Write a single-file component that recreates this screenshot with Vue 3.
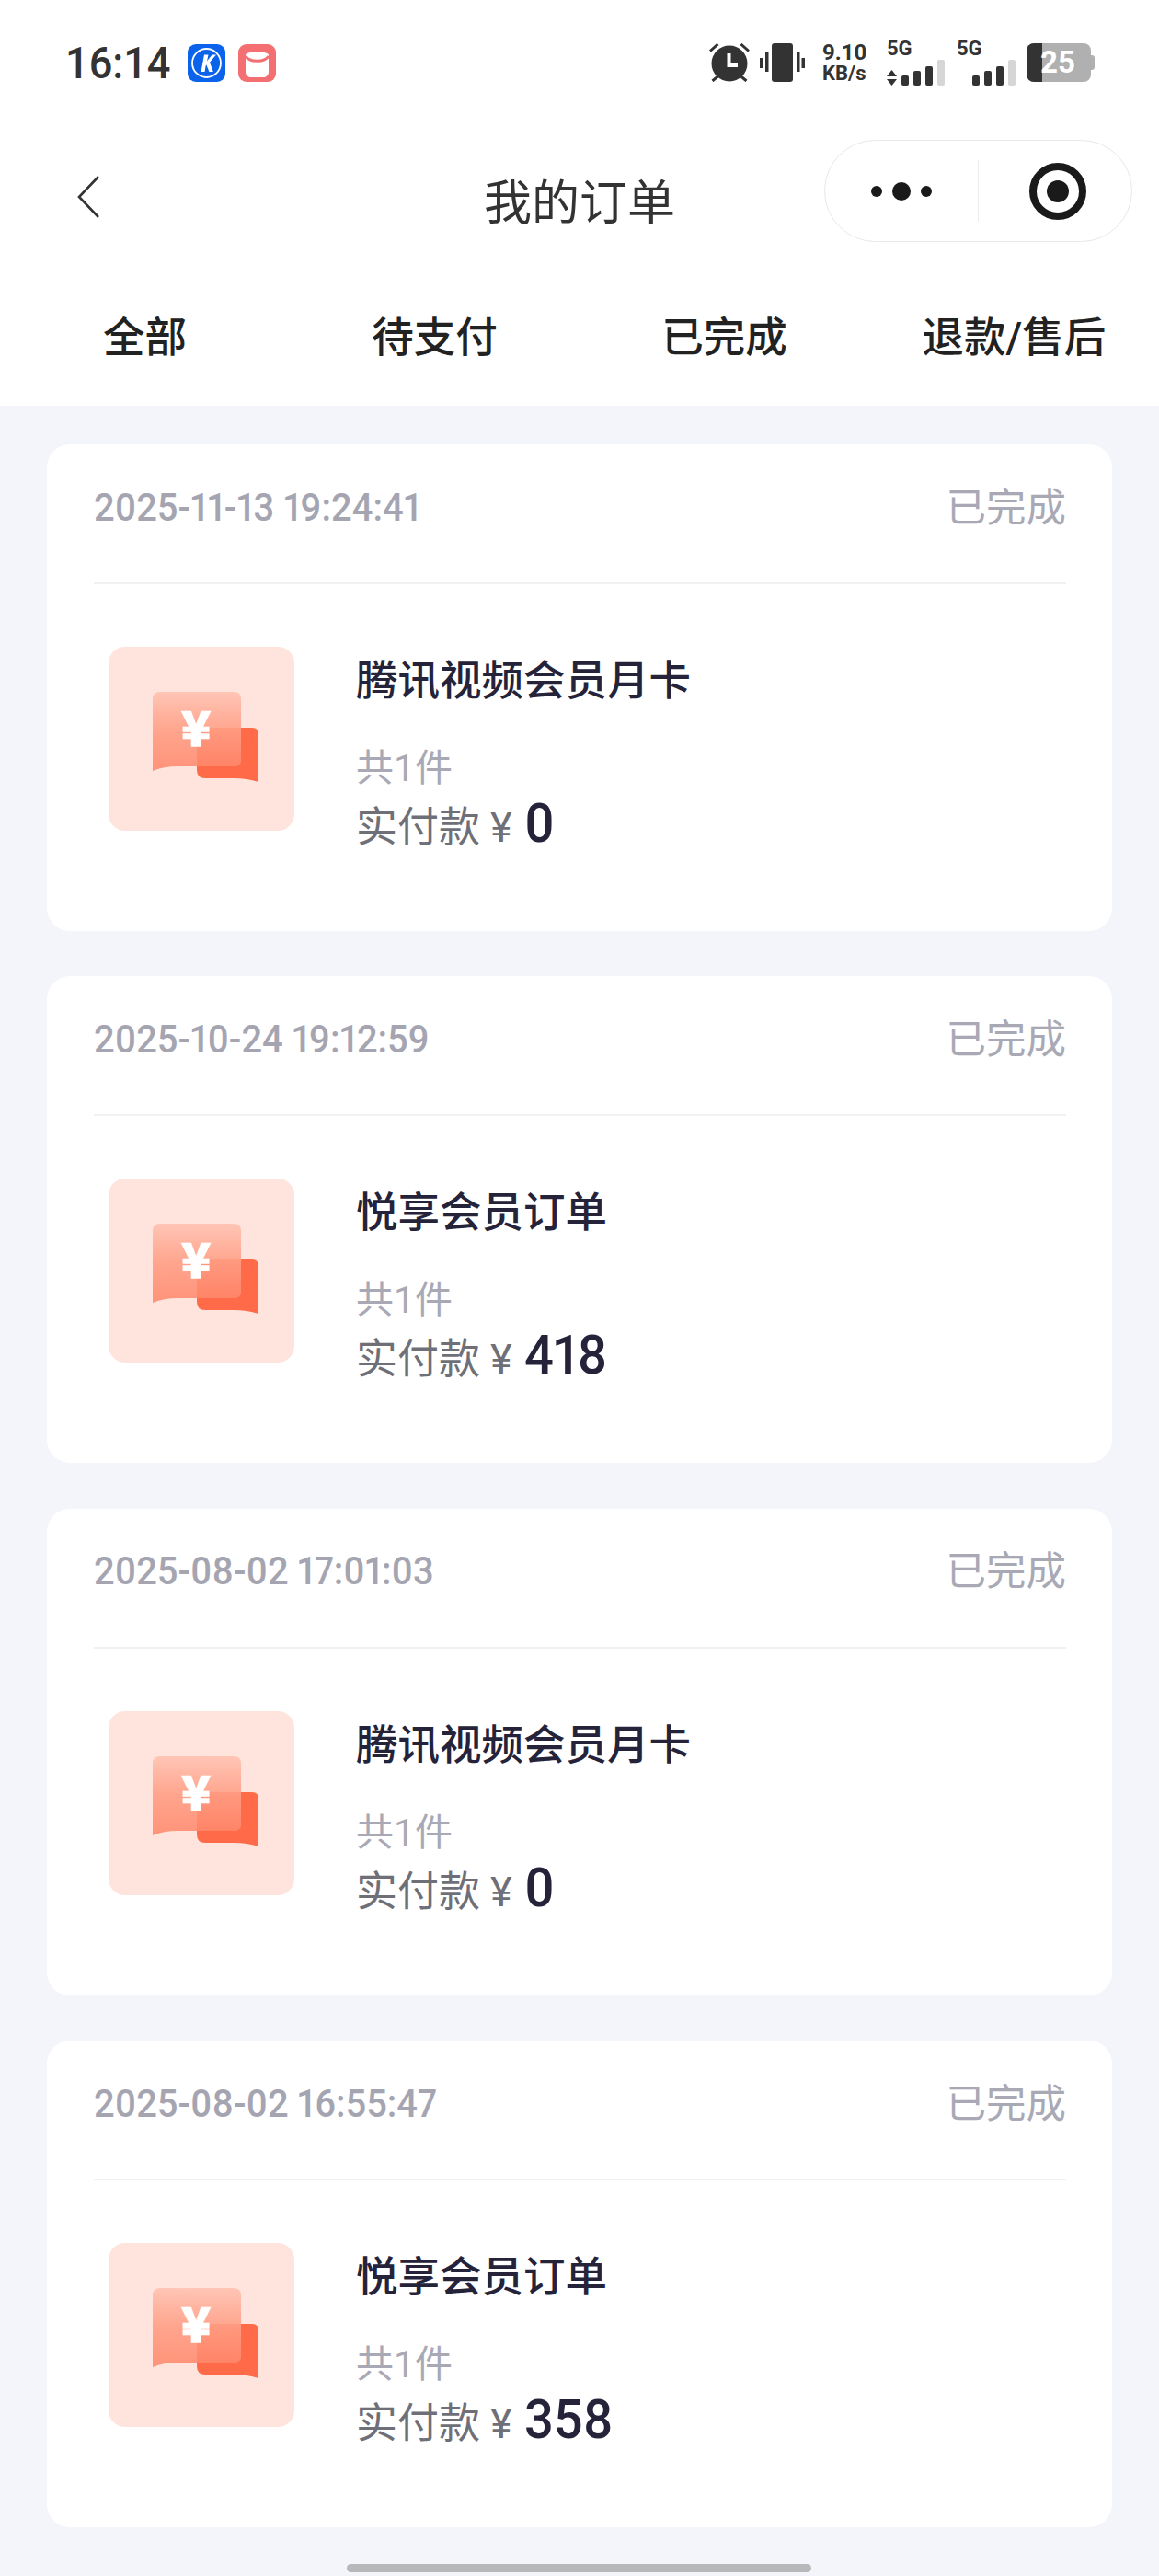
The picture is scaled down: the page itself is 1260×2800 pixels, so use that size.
<template>
  <div class="page">
    <div class="top">
      <div class="status">
        <div class="status-left">
          <span class="time">16:14</span>
          <svg class="app-ico" viewBox="0 0 41 41">
            <rect width="41" height="41" rx="9" fill="#0a63ea" />
            <circle cx="20.5" cy="20.5" r="15.5" fill="none" stroke="#fff" stroke-width="1.8" />
            <path d="M14.5 30 L18 11.5 H22.5 L21 18.4 L26.5 11.5 H31 L24 19.8 L27.8 30 H23.4 L20.4 22.6 L19.6 23.5 L18.6 30 Z" fill="#fff" />
          </svg>
          <svg class="app-ico" viewBox="0 0 41 41">
            <rect width="41" height="41" rx="9" fill="#f46f72" />
            <path d="M8 12 C8 7 33 7 33 12 V30 C33 34 30 36 27 36 H14 C11 36 8 34 8 30 Z" fill="#fff" />
            <path d="M8 13 C12 20 29 20 33 13" fill="none" stroke="#f46f72" stroke-width="3" />
          </svg>
        </div>
        <div class="status-right">
          <svg class="alarm" viewBox="0 0 44 42">
            <circle cx="22" cy="22" r="19.5" fill="#333" />
            <path d="M19.5 11 H23.5 V22 H31 V26 H19.5 Z" fill="#fff" />
            <path d="M1 8.5 L9.5 1 M43 8.5 L34.5 1 M3.5 41 L10 35.5 M40.5 41 L34 35.5" stroke="#333" stroke-width="3" fill="none" />
          </svg>
          <svg class="vibrate" viewBox="0 0 49 42">
            <rect x="13" y="0" width="23" height="42" rx="3" fill="#333" />
            <rect x="0" y="16" width="3.5" height="11" fill="#333" />
            <rect x="6" y="10" width="3.5" height="21" fill="#333" />
            <rect x="40" y="10" width="3.5" height="21" fill="#333" />
            <rect x="45.5" y="16" width="3.5" height="11" fill="#333" />
          </svg>
          <div class="speed">
            <span class="speed-num">9.10</span>
            <span class="speed-unit">KB/s</span>
          </div>
          <div class="net">
            <span class="net-label">5G</span>
            <div class="bars">
              <svg class="updown" viewBox="0 0 11 17"><path d="M5.5 0 L11 7 H0 Z M0 10 H11 L5.5 17 Z" fill="#333" /></svg>
              <i class="bar b1"></i><i class="bar b2"></i><i class="bar b3"></i><i class="bar b4"></i>
            </div>
          </div>
          <div class="net">
            <span class="net-label">5G</span>
            <div class="bars bars-right">
              <i class="bar b1"></i><i class="bar b2"></i><i class="bar b3"></i><i class="bar b4"></i>
            </div>
          </div>
          <div class="battery">
            <div class="battery-body">
              <div class="battery-fill"></div>
              <span class="battery-num">25</span>
            </div>
            <div class="battery-cap"></div>
          </div>
        </div>
      </div>

      <div class="nav">
        <svg class="back" viewBox="0 0 26 46"><path d="M24 1 L3 23 L24 45" fill="none" stroke="#333" stroke-width="2.6" /></svg>
        <span class="nav-title">我的订单</span>
        <div class="capsule">
          <div class="capsule-left">
            <i class="dot"></i><i class="dot dot-big"></i><i class="dot"></i>
          </div>
          <div class="capsule-line"></div>
          <div class="capsule-right"><div class="target"><i></i></div></div>
        </div>
      </div>

      <div class="tabs">
        <span v-for="t in tabs" :key="t" class="tab">{{ t }}</span>
      </div>
    </div>

    <div class="list">
      <div v-for="o in orders" :key="o.time" class="card">
        <div class="card-head">
          <span class="card-time">{{ o.time }}</span>
          <span class="card-state">已完成</span>
        </div>
        <div class="card-body">
          <div class="thumb">
            <svg viewBox="0 0 202 200" width="202" height="200">
              <defs>
                <linearGradient id="front" x1="0" y1="0" x2="0" y2="1">
                  <stop offset="0" stop-color="#ffc5b5" />
                  <stop offset="0.5" stop-color="#ffa48d" />
                  <stop offset="1" stop-color="#ff9379" />
                </linearGradient>
                <linearGradient id="overlap" x1="0" y1="0" x2="0" y2="1">
                  <stop offset="0" stop-color="#ff9a80" />
                  <stop offset="1" stop-color="#ff8467" />
                </linearGradient>
              </defs>
              <path d="M96 95 Q96 88 103 88 H156 Q163 88 163 95 V147 Q150 143 135 143 H105 Q96 143 96 134 Z" fill="#ff6b48" />
              <path d="M48 57 Q48 49 56 49 H136 Q144 49 144 57 V122 Q144 130 136 130 H75 Q60 130 48 135 Z" fill="url(#front)" />
              <path d="M96 130 V88 H144 V122 Q144 130 136 130 Z" fill="url(#overlap)" />
              <text x="95" y="108" class="yen-mark" text-anchor="middle">¥</text>
            </svg>
          </div>
          <div class="info">
            <div class="info-title">{{ o.title }}</div>
            <div class="info-count">共1件</div>
            <div class="info-price">
              <span class="price-label">实付款</span>
              <span class="price-yen">¥</span>
              <span class="price-num">{{ o.price }}</span>
            </div>
          </div>
        </div>
      </div>
    </div>

    <div class="home-bar"></div>
  </div>
</template>

<script setup>
const tabs = ['全部', '待支付', '已完成', '退款/售后']

const orders = [
  { time: '2025-11-13 19:24:41', title: '腾讯视频会员月卡', price: '0' },
  { time: '2025-10-24 19:12:59', title: '悦享会员订单', price: '418' },
  { time: '2025-08-02 17:01:03', title: '腾讯视频会员月卡', price: '0' },
  { time: '2025-08-02 16:55:47', title: '悦享会员订单', price: '358' }
]
</script>

<style>
html,
body {
  margin: 0;
  background: #f4f5fa;
}
</style>

<style scoped>
.page {
  position: relative;
  width: 1260px;
  height: 2800px;
  overflow: hidden;
  background: #f4f5fa;
  font-family: "Roboto", "Noto Sans CJK SC", sans-serif;
  display: flex;
  flex-direction: column;
}

.top {
  background: #fff;
}

.status {
  height: 136px;
  display: flex;
  align-items: center;
  justify-content: space-between;
  padding: 0 70px 0 71px;
}

.status-left {
  display: flex;
  align-items: center;
}

.time {
  display: inline-block;
  width: 133px;
  font-size: 48px;
  font-weight: 500;
  color: #333;
  transform: scaleX(0.94);
  transform-origin: left;
}

.app-ico {
  width: 41px;
  height: 41px;
  margin-right: 14px;
}

.status-right {
  display: flex;
  align-items: center;
}

.alarm {
  width: 44px;
  height: 42px;
  margin-right: 11px;
}

.vibrate {
  width: 49px;
  height: 42px;
  margin-right: 20px;
}

.speed {
  width: 50px;
  margin-left: -1px;
  margin-right: 20px;
  display: flex;
  flex-direction: column;
  color: #333;
  font-weight: 700;
  line-height: 1;
}

.speed-num {
  font-size: 24px;
  line-height: 23px;
}

.speed-unit {
  font-size: 22px;
  line-height: 21px;
}

.net {
  width: 64px;
  margin-right: 12px;
  color: #333;
}

.net-label {
  display: block;
  font-size: 22px;
  font-weight: 700;
  line-height: 20px;
  margin-bottom: 2px;
}

.bars {
  display: flex;
  align-items: flex-end;
  height: 28px;
  gap: 5px;
}

.bars-right {
  justify-content: flex-end;
}

.updown {
  width: 11px;
  height: 17px;
}

.bar {
  display: block;
  width: 8px;
  background: #333;
  border-radius: 2px;
}

.b1 { height: 11px; }
.b2 { height: 16px; }
.b3 { height: 21px; }
.b4 { height: 28px; background: #d6d6d6; }

.battery {
  display: flex;
  align-items: center;
}

.battery-body {
  position: relative;
  width: 70px;
  height: 42px;
  border-radius: 8px;
  overflow: hidden;
  background: #b0b0b0;
}

.battery-fill {
  width: 17px;
  height: 100%;
  background: #333;
}

.battery-num {
  position: absolute;
  left: 15px;
  top: 0;
  line-height: 42px;
  font-size: 33px;
  font-weight: 700;
  color: #fff;
}

.battery-cap {
  width: 4px;
  height: 16px;
  background: #b0b0b0;
  border-radius: 0 3px 3px 0;
}

.nav {
  position: relative;
  height: 144px;
  display: flex;
  align-items: center;
  justify-content: center;
}

.back {
  position: absolute;
  left: 83px;
  top: 55px;
  width: 26px;
  height: 46px;
}

.nav-title {
  font-size: 52px;
  font-weight: 400;
  color: #333;
  margin-top: 16px;
}

.capsule {
  position: absolute;
  left: 896px;
  top: 16px;
  width: 335px;
  height: 111px;
  box-sizing: border-box;
  border: 1px solid #e8e8e8;
  border-radius: 56px;
  display: flex;
  align-items: center;
}

.capsule-left {
  width: 166px;
  display: flex;
  justify-content: center;
  align-items: center;
  gap: 11px;
}

.dot {
  display: block;
  width: 12px;
  height: 12px;
  border-radius: 50%;
  background: #1a1a1a;
}

.dot-big {
  width: 20px;
  height: 20px;
}

.capsule-line {
  width: 1px;
  height: 67px;
  background: #ececec;
}

.capsule-right {
  flex: 1;
  padding-left: 6px;
  display: flex;
  justify-content: center;
}

.target {
  width: 62px;
  height: 62px;
  box-sizing: border-box;
  border: 8px solid #1a1a1a;
  border-radius: 50%;
  display: flex;
  align-items: center;
  justify-content: center;
}

.target i {
  display: block;
  width: 24px;
  height: 24px;
  border-radius: 50%;
  background: #1a1a1a;
}

.tabs {
  height: 156px;
  padding-top: 5px;
  display: grid;
  grid-template-columns: repeat(4, 315px);
  align-items: center;
  justify-items: center;
}

.tab {
  font-size: 45.5px;
  font-weight: 500;
  color: #222;
  white-space: nowrap;
}

.list {
  padding: 42px 51px 0;
  display: flex;
  flex-direction: column;
  gap: 49.4px;
}

.card {
  height: 529px;
  box-sizing: border-box;
  padding: 0 50px 0 51px;
  background: #fff;
  border-radius: 25px;
}

.card-head {
  height: 152px;
  box-sizing: border-box;
  padding-bottom: 20px;
  border-bottom: 2px solid #f1f1f4;
  display: flex;
  align-items: center;
  justify-content: space-between;
}

.card-time {
  display: inline-block;
  font-size: 42px;
  font-weight: 500;
  color: #a5a5b2;
  margin-top: 6px;
  font-variant-numeric: proportional-nums;
  transform: scaleX(0.95);
  transform-origin: left;
}

.card-state {
  font-size: 43.5px;
  color: #a9a9b6;
}

.card-body {
  display: flex;
  padding: 68px 0 0 16px;
}

.thumb {
  width: 202px;
  height: 200px;
  border-radius: 18px;
  background: #fee4dd;
  overflow: hidden;
}

.thumb svg {
  display: block;
}

.yen-mark {
  font-family: "Noto Sans CJK SC", sans-serif;
  font-size: 52px;
  font-weight: 900;
  fill: #fff;
  stroke: #fff;
  stroke-width: 1.5px;
}

.info {
  margin-left: 67px;
}

.info-title {
  font-size: 45.5px;
  font-weight: 500;
  line-height: 60px;
  margin-top: 8px;
  color: #25233a;
}

.info-count {
  font-size: 41px;
  line-height: 50px;
  margin-top: 39px;
  color: #a9a9b6;
}

.info-price {
  display: flex;
  align-items: baseline;
  margin-top: 5px;
  line-height: 60px;
}

.price-label {
  font-size: 45px;
  color: #6f6f78;
}

.price-yen {
  font-size: 45px;
  color: #6f6f78;
  margin-left: 11px;
}

.price-num {
  display: inline-block;
  font-size: 59px;
  font-weight: 500;
  color: #25233a;
  margin-left: 13px;
  font-variant-numeric: proportional-nums;
  transform: scaleX(0.95);
  transform-origin: left;
}

.home-bar {
  position: absolute;
  left: 377px;
  top: 2787px;
  width: 505px;
  height: 9px;
  border-radius: 5px;
  background: #b7b8ba;
}
</style>
